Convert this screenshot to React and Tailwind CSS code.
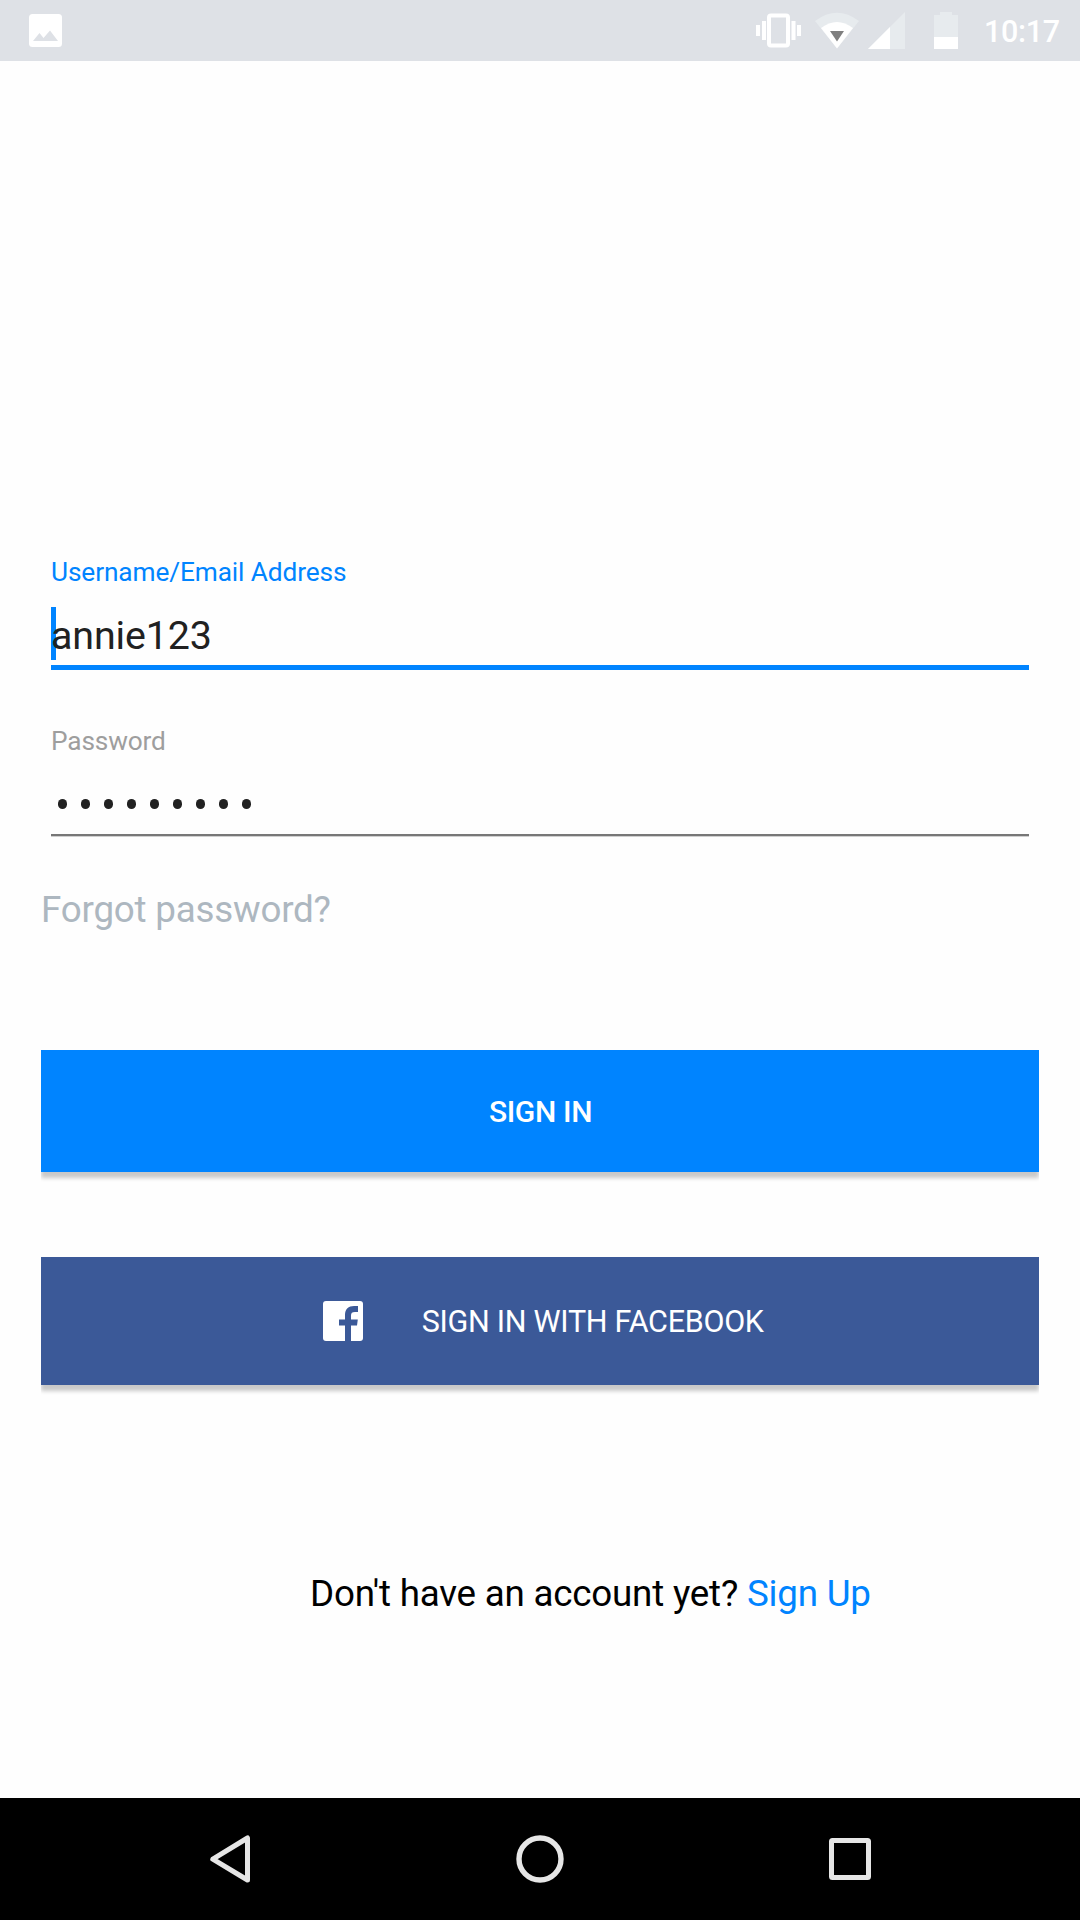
import React from "react";

function StatusBar() {
  return (
    <header className="flex h-[61px] items-start bg-[#dee1e6] text-white">
      <svg className="ml-[29px] mt-[14px] h-[33px] w-[33px]" viewBox="0 0 33 33">
        <rect width="33" height="33" rx="3.5" fill="#fff" />
        <path d="M4 27 L10.5 19 L14.5 24 L21 16.5 L29 27 Z" fill="#dee1e6" />
      </svg>
      <svg className="ml-[694px] mt-[13px] h-[35px] w-[45px]" viewBox="0 0 45 35" fill="#fff">
        <rect x="0" y="12" width="4" height="11" />
        <rect x="6" y="8" width="4" height="19" />
        <rect x="13" y="2.5" width="19" height="30" rx="2" fill="none" stroke="#fff" strokeWidth="4" />
        <rect x="35.5" y="8" width="4" height="19" />
        <rect x="41" y="12" width="4" height="11" />
      </svg>
      <svg className="ml-[13px] mt-[12px] h-[37px] w-[46px]" viewBox="0 0 46 37">
        <path d="M1 9 Q23 -7.500 45 9 L23 36.500 Z" fill="#e7ebee" />
        <path d="M7 16 Q23 4 39 16 L23 36.500 Z" fill="#fff" />
        <path d="M16 19 H30 L23 29.500 Z" fill="#7f7f7f" />
      </svg>
      <svg className="ml-[8px] mt-[12px] h-[37px] w-[37px]" viewBox="0 0 37 37">
        <path d="M0 37 L37 0 V37 Z" fill="#e7ebee" />
        <path d="M0 37 L22 15 V37 Z" fill="#fff" />
      </svg>
      <svg className="ml-[29px] mt-[12px] h-[37px] w-[24px]" viewBox="0 0 24 37">
        <path d="M0 3 H6 V0 H18 V3 H24 V37 H0 Z" fill="#e7ebee" />
        <rect y="25" width="24" height="12" fill="#fff" />
      </svg>
      <span className="ml-[26px] mt-[14px] text-[30.5px] font-medium leading-[36px] tracking-[-0.35px] whitespace-nowrap">10:17</span>
    </header>
  );
}

function PasswordDots() {
  return (
    <div className="mt-[42px] ml-[7px] flex gap-[14px]">
      {Array.from({ length: 9 }, (_, i) => (
        <span key={i} className="h-[10px] w-[9px] rounded-full bg-[#212121]" />
      ))}
    </div>
  );
}

export default function App() {
  return (
    <div className="flex h-[1920px] w-[1080px] flex-col overflow-hidden bg-[#fefefe] font-['Roboto',sans-serif]">
      <StatusBar />

      <main className="flex flex-1 flex-col px-[41px]">
        <section className="mx-[10px] mt-[495px] flex h-[114px] flex-col border-b-[5px] border-[#0084ff]">
          <label className="h-[32px] text-[26.25px] leading-[32px] tracking-[-0.11px] whitespace-nowrap text-[#0084ff]">
            Username/Email Address
          </label>
          <div className="relative mt-[19px] h-[53px]">
            <span className="absolute left-0 top-0 h-[53px] w-[5px] bg-[#0084ff]" />
            <span className="relative block text-[39.4px] leading-[58px] tracking-[-0.15px] text-[#212121]">annie123</span>
          </div>
        </section>

        <section className="mx-[10px] mt-[55px] flex h-[111px] flex-col border-b-2 border-[#777777] shadow-[0_1px_0_#cfcfcf]">
          <label className="h-[32px] text-[26.25px] leading-[32px] tracking-[-0.15px] text-[#9e9e9e]">Password</label>
          <PasswordDots />
        </section>

        <a className="mt-[52px] h-[44px] text-[36.75px] leading-[44px] tracking-[-0.21px] text-[#adb7c0]">Forgot password?</a>

        <button className="mt-[118px] flex h-[122px] items-center justify-center bg-[#0084ff] pl-[1px] text-[30px] font-medium tracking-[-0.35px] text-white shadow-[0_6px_4px_rgba(0,0,0,0.21)] [clip-path:inset(-2px_0_-12px_0)]">
          SIGN IN
        </button>

        <button className="mt-[85px] flex h-[128px] items-center bg-[#3b5998] text-[30.5px] tracking-[-0.28px] text-white shadow-[0_6px_4px_rgba(0,0,0,0.21)] [clip-path:inset(-2px_0_-12px_0)]">
          <svg className="ml-[282px] h-[40px] w-[40px]" viewBox="0 0 40 40">
            <rect width="40" height="40" rx="3" fill="#fff" />
            <path
              d="M22 40 V24.500 H16 V18.500 H22 V14 C22 8 25.500 5 31 5 H35 V11 H32 C29 11 28 12 28 14.500 V18.500 H34.800 L34 24.500 H28 V40 Z"
              fill="#3b5998"
            />
          </svg>
          <span className="ml-[58.7px] pt-[2px] whitespace-nowrap">SIGN IN WITH FACEBOOK</span>
        </button>

        <p className="ml-[269px] mt-[187px] h-[44px] text-[36.75px] leading-[44px] tracking-[-0.22px] whitespace-nowrap text-black">
          Don't have an account yet? <a className="text-[#0084ff]">Sign Up</a>
        </p>
      </main>

      <nav className="flex h-[122px] items-center bg-black">
        <svg className="ml-[209px] h-[50px] w-[42px]" viewBox="0 0 42 50">
          <path d="M38.500 4 V46 L3.800 25.200 Z" fill="none" stroke="#e6e6e6" strokeWidth="5" strokeLinejoin="round" />
        </svg>
        <svg className="ml-[265px] h-[48px] w-[48px]" viewBox="0 0 48 48">
          <circle cx="24" cy="24" r="21" fill="none" stroke="#e6e6e6" strokeWidth="5.400" />
        </svg>
        <svg className="ml-[265px] h-[42px] w-[42px]" viewBox="0 0 42 42">
          <rect x="2.500" y="2.500" width="37" height="37" rx="1" fill="none" stroke="#e6e6e6" strokeWidth="5" strokeLinejoin="round" />
        </svg>
      </nav>
    </div>
  );
}
